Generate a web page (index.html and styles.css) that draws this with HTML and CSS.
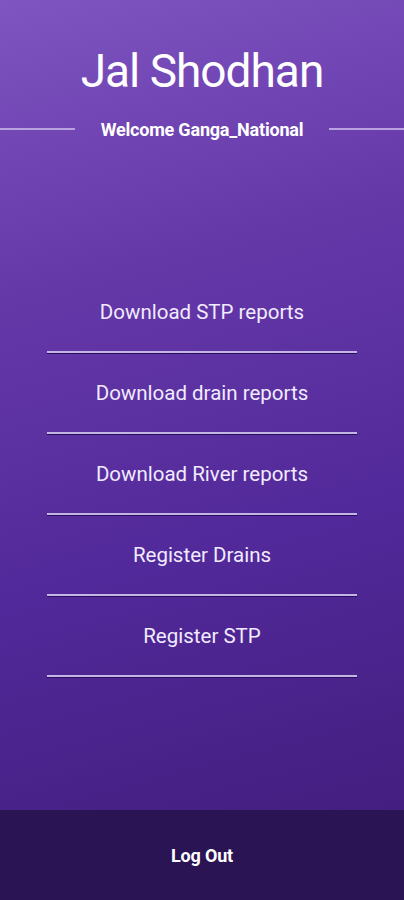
FILE: index.html
```html
<!DOCTYPE html>
<html lang="en">
<head>
    <meta charset="UTF-8">
    <meta name="viewport" content="width=device-width, initial-scale=1.0">
    <title>Jal Shodhan</title>
    <link rel="stylesheet" href="styles.css">
</head>
<body>

<div class="screen">
    <header class="top">
        <h1 class="title">Jal Shodhan</h1>
        <div class="welcome">
            <span class="rule"></span>
            <span class="welcome-text">Welcome Ganga_National</span>
            <span class="rule"></span>
        </div>
    </header>

    <!-- Menu principal -->
    <nav class="menu">
        <a class="menu-item" href="#">Download STP reports</a>
        <a class="menu-item" href="#">Download drain reports</a>
        <a class="menu-item" href="#">Download River reports</a>
        <a class="menu-item" href="#">Register Drains</a>
        <a class="menu-item" href="#">Register STP</a>
    </nav>

    <footer class="bottom">
        <a class="logout" href="#">Log Out</a>
    </footer>
</div>

</body>
</html>
```

FILE: styles.css
```css
body {
    margin: 0;
    padding: 0;
    font-family: Roboto, 'Liberation Sans', sans-serif;
    background-color: #3e1a72;
}
.screen {
    width: 404px;
    height: 900px;
    display: flex;
    flex-direction: column;
    background: linear-gradient(165deg, #7e55c1 0%, #6538a8 30%, #52299a 60%, #401b78 100%);
    color: #fff;
}
.top {
    padding-top: 41px;
}
.title {
    margin: 0;
    text-align: center;
    font-size: 46px;
    font-weight: 400;
    letter-spacing: -1px;
    line-height: 60px;
    color: #fff;
}
.welcome {
    display: flex;
    align-items: center;
    margin-top: 18px;
    height: 20px;
}
.rule {
    flex: 1;
    height: 2px;
    background-color: #b9a2de;
}
.welcome-text {
    padding: 0 26px;
    font-size: 18px;
    font-weight: bold;
    letter-spacing: -0.2px;
    white-space: nowrap;
}
.menu {
    width: 310px;
    margin: 133px auto 0;
    display: flex;
    flex-direction: column;
}
.menu-item {
    display: block;
    padding: 28px 0 27px;
    line-height: 24px;
    font-size: 20.5px;
    text-align: center;
    color: #f1ebff;
    text-decoration: none;
    border-bottom: 2px solid #c4b6e2;
    box-shadow: 0 1px 0 #2a0c62;
}
.bottom {
    margin-top: auto;
    height: 90px;
    display: flex;
    align-items: center;
    justify-content: center;
    background-color: #2b1453;
}
.logout {
    color: #fff;
    font-size: 18px;
    font-weight: bold;
    text-decoration: none;
    letter-spacing: -0.2px;
}
```
